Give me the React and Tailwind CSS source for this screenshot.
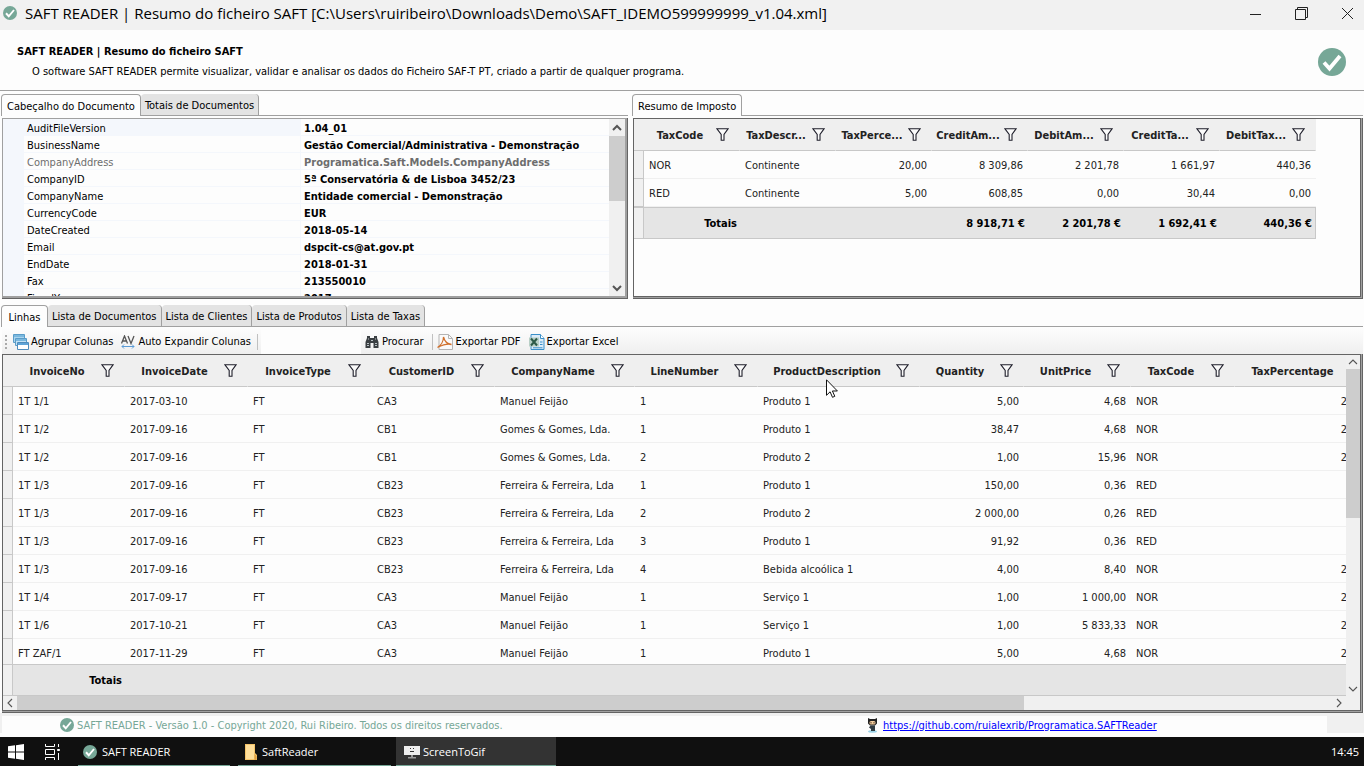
import React from 'react';

const PROPERTIES = [
  ['AuditFileVersion', '1.04_01'],
  ['BusinessName', 'Gestão Comercial/Administrativa - Demonstração'],
  ['CompanyAddress', 'Programatica.Saft.Models.CompanyAddress'],
  ['CompanyID', '5ª Conservatória & de Lisboa 3452/23'],
  ['CompanyName', 'Entidade comercial - Demonstração'],
  ['CurrencyCode', 'EUR'],
  ['DateCreated', '2018-05-14'],
  ['Email', 'dspcit-cs@at.gov.pt'],
  ['EndDate', '2018-01-31'],
  ['Fax', '213550010'],
  ['FiscalYear', '2017'],
];

const TAX_COLUMNS = ['TaxCode', 'TaxDescr...', 'TaxPerce...', 'CreditAm...', 'DebitAm...', 'CreditTa...', 'DebitTax...'];
const TAX_ROWS = [
  ['NOR', 'Continente', '20,00', '8 309,86', '2 201,78', '1 661,97', '440,36'],
  ['RED', 'Continente', '5,00', '608,85', '0,00', '30,44', '0,00'],
];
const TAX_TOTALS = ['Totais', '', '', '8 918,71 €', '2 201,78 €', '1 692,41 €', '440,36 €'];

const LINE_COLUMNS = [
  { name: 'InvoiceNo', width: 'w-[112px]' },
  { name: 'InvoiceDate', width: 'w-[123px]' },
  { name: 'InvoiceType', width: 'w-[124px]' },
  { name: 'CustomerID', width: 'w-[123px]' },
  { name: 'CompanyName', width: 'w-[140px]' },
  { name: 'LineNumber', width: 'w-[123px]' },
  { name: 'ProductDescription', width: 'w-[162px]' },
  { name: 'Quantity', width: 'w-[104px]', numeric: true },
  { name: 'UnitPrice', width: 'w-[107px]', numeric: true },
  { name: 'TaxCode', width: 'w-[104px]' },
  { name: 'TaxPercentage', width: 'w-[139px]', numeric: true },
];
const LINES = [
  ['1T 1/1', '2017-03-10', 'FT', 'CA3', 'Manuel Feijão', '1', 'Produto 1', '5,00', '4,68', 'NOR', '20,00'],
  ['1T 1/2', '2017-09-16', 'FT', 'CB1', 'Gomes & Gomes, Lda.', '1', 'Produto 1', '38,47', '4,68', 'NOR', '20,00'],
  ['1T 1/2', '2017-09-16', 'FT', 'CB1', 'Gomes & Gomes, Lda.', '2', 'Produto 2', '1,00', '15,96', 'NOR', '20,00'],
  ['1T 1/3', '2017-09-16', 'FT', 'CB23', 'Ferreira & Ferreira, Lda', '1', 'Produto 1', '150,00', '0,36', 'RED', '5,00'],
  ['1T 1/3', '2017-09-16', 'FT', 'CB23', 'Ferreira & Ferreira, Lda', '2', 'Produto 2', '2 000,00', '0,26', 'RED', '5,00'],
  ['1T 1/3', '2017-09-16', 'FT', 'CB23', 'Ferreira & Ferreira, Lda', '3', 'Produto 1', '91,92', '0,36', 'RED', '5,00'],
  ['1T 1/3', '2017-09-16', 'FT', 'CB23', 'Ferreira & Ferreira, Lda', '4', 'Bebida alcoólica 1', '4,00', '8,40', 'NOR', '20,00'],
  ['1T 1/4', '2017-09-17', 'FT', 'CA3', 'Manuel Feijão', '1', 'Serviço 1', '1,00', '1 000,00', 'NOR', '20,00'],
  ['1T 1/6', '2017-10-21', 'FT', 'CA3', 'Manuel Feijão', '1', 'Serviço 1', '1,00', '5 833,33', 'NOR', '20,00'],
  ['FT ZAF/1', '2017-11-29', 'FT', 'CA3', 'Manuel Feijão', '1', 'Produto 1', '5,00', '4,68', 'NOR', '20,00'],
];

function CheckBadge({ className }) {
  return (
    <svg viewBox="0 0 28 28" className={className} aria-hidden="true">
      <circle cx="14" cy="14" r="14" fill="#76a797" />
      <path d="M6 14.500 11.500 20.500 22 8" fill="none" stroke="#fff" strokeWidth="3.800" />
    </svg>
  );
}

function Funnel() {
  return (
    <svg viewBox="0 0 13 13" className="block h-[13px] w-[13px]" aria-hidden="true">
      <path d="M.8.700h11.400L8 6.400v5.800H5.200V6.400z" fill="#fafafa" stroke="#1f1f2b" strokeWidth="1.100" />
    </svg>
  );
}

function Chevron({ direction, thick }) {
  const paths = {
    up: 'M1 7l4-4 4 4',
    down: 'M1 3l4 4 4-4',
    left: 'M7 1 3 5l4 4',
    right: 'M3 1l4 4-4 4',
  };
  return (
    <svg viewBox="0 0 10 10" className="block h-2.5 w-2.5" aria-hidden="true">
      <path d={paths[direction]} fill="none" stroke="#555" strokeWidth={thick ? 2 : 1.1} />
    </svg>
  );
}

function Tabs({ label, items }) {
  return (
    <div role="tablist" aria-label={label} className="flex h-[22px]">
      {items.map((item, i) => (
        <button
          key={item}
          role="tab"
          aria-selected={i === 0}
          className={
            i === 0
              ? 'min-w-[47px] rounded-t border-x border-t border-[#a0a0a0] bg-[#fdfdfd] px-[5px] pt-0.5 whitespace-nowrap'
              : 'rounded-t border-r border-b border-r-[#a0a0a0] border-b-[#a0a0a0] bg-[#e3e3e3] px-1 pt-0.5 whitespace-nowrap'
          }
        >
          {item}
        </button>
      ))}
      <div className="flex-1 border-b border-[#a0a0a0]" />
    </div>
  );
}

function HeaderCell({ name }) {
  return (
    <th scope="col" className="h-8 border-r border-b border-r-[#efefef] border-b-[#c8c8c8] bg-[#efefef] p-0">
      <div className="flex items-center pr-2.5">
        <span className="flex-1 pt-0.5 text-center whitespace-nowrap">{name}</span>
        <button aria-label={'Filtrar ' + name}>
          <Funnel />
        </button>
      </div>
    </th>
  );
}

function WindowBar() {
  return (
    <header className="flex h-[30px] shrink-0 items-center bg-[#f1f1f1] pr-2.5 pb-1 pl-[3px]">
      <CheckBadge className="h-3.5 w-3.5" />
      <h1 className="ml-2 flex-1 truncate font-['Open_Sans','Noto_Sans',sans-serif] text-[15px] leading-6">
        SAFT READER | Resumo do ficheiro SAFT [C:\Users\ruiribeiro\Downloads\Demo\SAFT_IDEMO599999999_v1.04.xml]
      </h1>
      <div className="flex items-center gap-[33px]">
        <button aria-label="Minimizar">
          <svg viewBox="0 0 13 13" className="h-[13px] w-[13px]"><path d="M1 7.500h11" stroke="#222" /></svg>
        </button>
        <button aria-label="Restaurar">
          <svg viewBox="0 0 13 13" className="h-[13px] w-[13px]" fill="none" stroke="#222">
            <path d="M.5 2.500h10v10H.5zM2.500 2.500v-2h10v10h-2" />
          </svg>
        </button>
        <button aria-label="Fechar">
          <svg viewBox="0 0 13 13" className="h-[13px] w-[13px]"><path d="M1 1l11 11M12 1 1 12" stroke="#222" /></svg>
        </button>
      </div>
    </header>
  );
}

function PropertyGrid() {
  return (
    <div className="flex h-[181px] border-r border-b border-[#646464]">
      <div className="flex flex-1 overflow-hidden border-t border-r-2 border-b-2 border-l border-[#a0a0a0]">
        <div className="flex-1 overflow-hidden">
          <table className="w-full table-fixed border-separate border-spacing-0 leading-3">
            <colgroup>
              <col className="w-[21px]" />
              <col className="w-[277px]" />
              <col />
            </colgroup>
            <tbody>
              {PROPERTIES.map(([name, value], i) => (
                <tr key={name} className={name === 'CompanyAddress' ? 'h-[17px] text-[#6d6d6d]' : 'h-[17px] text-black'}>
                  <td className="bg-[#f4f7fc] p-0" />
                  <th
                    scope="row"
                    className={
                      i === 0
                        ? 'border-r border-b border-[#f4f7fc] bg-[#f4f7fc] p-0 pt-1 pl-[3px] text-left font-normal'
                        : 'border-r border-b border-[#f4f7fc] p-0 pt-1 pl-[3px] text-left font-normal'
                    }
                  >
                    {name}
                  </th>
                  <td className="border-b border-[#f4f7fc] p-0 pt-1 pl-[3px] font-bold whitespace-nowrap">{value}</td>
                </tr>
              ))}
            </tbody>
          </table>
        </div>
        <div className="flex w-4 flex-col items-center bg-[#f0f0f0]">
          <div className="flex h-[17px] items-center"><Chevron direction="up" thick /></div>
          <div className="h-[65px] w-full bg-[#cdcdcd]" />
          <div className="mt-auto flex h-[17px] items-center"><Chevron direction="down" thick /></div>
        </div>
      </div>
    </div>
  );
}

function TaxGrid() {
  return (
    <div className="flex h-[181px] border-r border-b border-[#646464]">
      <div className="flex flex-1 overflow-hidden border-r border-b border-[#a0a0a0]">
        <div className="flex-1 overflow-hidden border border-[#646464] text-[#222]">
          <table className="w-[682px] table-fixed border-separate border-spacing-0">
            <colgroup>
              <col className="w-2.5" />
              {TAX_COLUMNS.map((c) => <col key={c} className="w-24" />)}
            </colgroup>
            <thead>
              <tr>
                <td className="border-b border-[#c8c8c8] bg-[#efefef] p-0" />
                {TAX_COLUMNS.map((c) => <HeaderCell key={c} name={c} />)}
              </tr>
            </thead>
            <tbody>
              {TAX_ROWS.map((row) => (
                <tr key={row[0]} className="h-7">
                  <td className="border-r border-b border-[#c8c8c8] bg-[#f0f0f0] p-0" />
                  {row.map((v, i) => (
                    <td
                      key={i}
                      className={
                        i > 1 ? 'border-b border-[#f0f0f0] p-0 pt-0.5 pr-[5px] text-right' : 'border-b border-[#f0f0f0] p-0 pt-0.5 pl-[5px]'
                      }
                    >
                      {v}
                    </td>
                  ))}
                </tr>
              ))}
            </tbody>
            <tfoot>
              <tr className="h-8">
                <td className="border-y border-r border-[#c8c8c8] bg-[#f0f0f0] p-0" />
                {TAX_TOTALS.map((v, i) => (
                  <td
                    key={i}
                    className="border-y border-[#c8c8c8] bg-[#e5e5e5] p-0 pt-0.5 pr-[3px] text-right font-bold text-black last:border-r"
                  >
                    {v}
                  </td>
                ))}
              </tr>
            </tfoot>
          </table>
        </div>
      </div>
    </div>
  );
}

function Toolbar() {
  return (
    <div role="toolbar" aria-label="Ações" className="mt-px ml-0.5 flex h-[26px] items-center bg-linear-to-b from-[#fdfdfd] to-[#efefef] pt-px pl-[3px] text-black">
      <svg viewBox="0 0 2 14" className="h-3.5 w-0.5"><path d="M1 0v14" stroke="#aaa" strokeWidth="2" strokeDasharray="2 2" /></svg>
      <button className="ml-1.5 flex items-center gap-0.5 whitespace-nowrap">
        <svg viewBox="0 0 16 16" className="h-4 w-4">
          <path d="M.5.500h11v8H.5z" fill="#a9d4ee" stroke="#5a9cc8" />
          <path d="M1 1h10v2H1z" fill="#7ab8de" />
          <path d="M2.500 4.500h11v7h-11z" fill="#c4e2f4" stroke="#5a9cc8" />
          <path d="M3 5h10v2H3z" fill="#7ab8de" />
          <path d="M4.500 8.500h11v7h-11z" fill="#fff" stroke="#4f8cbc" />
          <path d="M5 9h10v2H5z" fill="#5fa4d8" />
        </svg>
        Agrupar Colunas
      </button>
      <button className="ml-2 flex items-center gap-[3px] whitespace-nowrap">
        <svg viewBox="0 0 14 14" className="h-3.5 w-3.5">
          <path d="M.5 8.500 3.500 1 6.500 8.500M1.700 6h3.500M7 1l3 7.500L13 1" fill="none" stroke="#555" strokeWidth="1.300" />
          <path d="M1 11.500h12M3 9.500l-2 2 2 2M11 9.500l2 2-2 2" fill="none" stroke="#5b9bd5" />
        </svg>
        Auto Expandir Colunas
      </button>
      <div className="ml-1.5 h-4 w-px bg-[#c0c0c0]" />
      <input aria-label="Texto a procurar" className="ml-[3px] h-6 w-[100px] bg-[#fdfdfd] px-1" />
      <button className="ml-1 flex items-center gap-[3px]">
        <svg viewBox="0 0 14 14" className="h-3.5 w-3.5">
          <path d="M2 1h3v2h4V1h3v2l1.500 4v6H8.500V8h-3v5H.5V7L2 3z" fill="#3a3f42" />
          <path d="M2 8.500h2M10 8.500h2M2 10.500h2M10 10.500h2M3 4h1M10 4h1M6 5.500h2" stroke="#b8c0c4" />
        </svg>
        Procurar
      </button>
      <div className="ml-2 h-4 w-px bg-[#c0c0c0]" />
      <button className="ml-1 flex items-center gap-[3px] whitespace-nowrap">
        <svg viewBox="0 0 16 16" className="h-4 w-4">
          <path d="M2 .500h9.500l4 4v11H2z" fill="#fafafa" stroke="#b4b4b4" />
          <path d="M11.500.500v4h4" fill="none" stroke="#b4b4b4" />
          <path d="M.5 13.500C4 11.500 6.500 7 6.500 3c1 4 3.500 7 8 7.500-4-1-9 .5-14 3z" fill="none" stroke="#d0702c" strokeWidth="1.300" />
        </svg>
        Exportar PDF
      </button>
      <button className="ml-2 flex items-center gap-0.5 whitespace-nowrap">
        <svg viewBox="0 0 16 16" className="h-4 w-4">
          <path d="M2 .500h9.500l3.500 4v11H2z" fill="#dcecf8" stroke="#3a8fc8" />
          <path d="M11.500.500v4H15" fill="#fff" stroke="#3a8fc8" />
          <path d="M0 3.500h10v9H0z" fill="#b8cfc6" />
          <path d="M2 4.500l6 7M8 4.500l-6 7" stroke="#2c5a48" strokeWidth="2" />
          <path d="M11 8h2.500M11 10.500h2.500M4 13.800h9.500" stroke="#3a8fc8" />
        </svg>
        Exportar Excel
      </button>
    </div>
  );
}

function LinesGrid() {
  return (
    <div className="ml-0.5 flex min-h-0 flex-1 border-r border-b border-[#646464]">
      <div className="flex min-w-0 flex-1 border-r border-b border-[#a0a0a0]">
        <div className="flex min-w-0 flex-1 flex-col border border-[#646464]">
          <div className="flex min-h-0 flex-1">
            <div className="min-w-0 flex-1 overflow-hidden text-[#222]">
              <table className="w-[1371px] table-fixed border-separate border-spacing-0">
                <colgroup>
                  <col className="w-2.5" />
                  {LINE_COLUMNS.map((c) => <col key={c.name} className={c.width} />)}
                </colgroup>
                <thead>
                  <tr>
                    <td className="border-b border-[#c8c8c8] bg-[#efefef] p-0" />
                    {LINE_COLUMNS.map((c) => <HeaderCell key={c.name} name={c.name} />)}
                  </tr>
                </thead>
                <tbody>
                  {LINES.map((row, r) => (
                    <tr key={r} className="h-7">
                      <td className="border-r border-b border-[#c8c8c8] bg-[#f0f0f0] p-0" />
                      {row.map((v, i) => (
                        <td
                          key={i}
                          className={
                            LINE_COLUMNS[i].numeric
                              ? 'border-b border-[#f0f0f0] p-0 pt-0.5 pr-[5px] text-right whitespace-nowrap'
                              : 'border-b border-[#f0f0f0] p-0 pt-0.5 pl-[5px] whitespace-nowrap'
                          }
                        >
                          {v}
                        </td>
                      ))}
                    </tr>
                  ))}
                </tbody>
                <tfoot className="sticky bottom-0">
                  <tr className="h-8">
                    <td className="border-y border-r border-[#c8c8c8] bg-[#f0f0f0] p-0" />
                    <td className="border-y border-[#c8c8c8] bg-[#e5e5e5] p-0 pt-0.5 pr-[3px] text-right font-bold text-black">Totais</td>
                    <td colSpan={10} className="border-y border-[#c8c8c8] bg-[#e5e5e5] p-0" />
                  </tr>
                </tfoot>
              </table>
            </div>
            <div className="flex w-3.5 flex-col items-center bg-[#f0f0f0]">
              <div className="flex h-3.5 items-center"><Chevron direction="up" /></div>
              <div className="h-[149px] w-full bg-[#cdcdcd]" />
              <div className="mt-auto flex h-3.5 items-center"><Chevron direction="down" /></div>
            </div>
          </div>
          <div className="flex h-3.5 items-center bg-[#f0f0f0] pr-3.5">
            <div className="flex w-3.5 justify-center"><Chevron direction="left" /></div>
            <div className="h-full w-3/4 bg-[#cdcdcd]" />
            <div className="ml-auto flex w-3.5 justify-center"><Chevron direction="right" /></div>
          </div>
        </div>
      </div>
    </div>
  );
}

function StatusBar() {
  return (
    <footer className="flex h-5 shrink-0 bg-[#f0f0f0] pt-[3px] pl-0.5">
      <div className="flex flex-1 items-center bg-[#fdfdfd]">
        <div className="flex flex-1 items-center gap-[3px] pl-[58px] text-[#76a797]">
          <CheckBadge className="h-3.5 w-3.5" />
          <span className="pt-0.5">SAFT READER - Versão 1.0 - Copyright 2020, Rui Ribeiro. Todos os direitos reservados.</span>
        </div>
        <div className="flex w-[461px] items-center gap-1">
          <svg viewBox="0 0 13 16" className="h-4 w-[13px]" aria-hidden="true">
            <ellipse cx="6.500" cy="14.500" rx="4.500" ry="1.200" fill="#9cd3e8" />
            <path d="M2 1l2 1h5l2-1v5.500L9 8.500H4L2 6.500z" fill="#222" />
            <rect x="3.500" y="4" width="6" height="3.500" rx="1.500" fill="#f3cfa0" />
            <path d="M5 5v1.500M8 5v1.500" stroke="#5b3a22" />
            <path d="M4.500 8.500h4.500V14H5v-2L3 10.500z" fill="#2f3a40" />
          </svg>
          <a href="https://github.com/ruialexrib/Programatica.SAFTReader" className="pt-0.5 text-[#0000ff] underline">
            https://github.com/ruialexrib/Programatica.SAFTReader
          </a>
        </div>
      </div>
      <div className="w-[37px]" />
    </footer>
  );
}

function Taskbar() {
  return (
    <nav aria-label="Barra de tarefas" className="mt-1 flex h-[29px] shrink-0 items-center bg-[#101010] pl-2 font-['Open_Sans','Noto_Sans',sans-serif] text-[11px] text-white">
      <button aria-label="Iniciar">
        <svg viewBox="0 0 16 16" className="h-4 w-4" fill="#fff"><path d="M0 2.300 7 1.300v6.200H0zM8 1.200 16 0v7.500H8zM0 8.500h7v6.200l-7-1zM8 8.500h8V16l-8-1.200z" /></svg>
      </button>
      <button aria-label="Vista de tarefas" className="ml-5">
        <svg viewBox="0 0 17 16" className="h-4 w-[17px]" fill="none" stroke="#fff">
          <path d="M1.500 0v2.500h9V0M1.500 5.500h9v5h-9zM1.500 16v-2.500h9V16M14.500 0v3M14.500 9v7" />
          <path d="M13.500 5.500h2v1h-2z" fill="#fff" />
        </svg>
      </button>
      <button className="ml-[17px] flex h-full w-[152px] items-center gap-[5px] border-b border-[#76a797] pt-px pl-[5px]">
        <CheckBadge className="h-3.5 w-3.5" />
        SAFT READER
      </button>
      <button className="ml-2 flex h-full w-[153px] items-center gap-1 border-b border-[#76a797] pt-px pl-1.5">
        <svg viewBox="0 0 14 16" className="h-4 w-3.5"><path d="M1 0h10v9l2 2v5H1z" fill="#f5c469" /><path d="M2 1h8v14H2z" fill="#ffdf9a" /><path d="M10.500 10l2 2v4h-2z" fill="#e0a040" /></svg>
        SaftReader
      </button>
      <button className="ml-[5px] flex h-full w-[160px] items-center gap-[3px] border-b border-[#76a797] bg-[#333] pt-px pl-2">
        <svg viewBox="0 0 16 14" className="h-3.5 w-4"><path d="M0 1h16v9H0z" fill="#eee" /><path d="M6 3h1v1H6zM9 3h1v1H9zM6 6h4v1H6z" fill="#333" /><path d="M7 10h2v2h3v1.500H4V12h3z" fill="#999" /></svg>
        ScreenToGif
      </button>
      <time className="ml-auto pr-[5px]">14:45</time>
    </nav>
  );
}

export default function App() {
  return (
    <div className="relative flex h-screen flex-col overflow-hidden bg-[#fdfdfd] font-['DejaVu_Sans_Condensed','Noto_Sans',sans-serif] text-[11px] leading-4 text-black">
      <WindowBar />
      <section className="flex h-[61px] shrink-0 items-center justify-between border-b border-[#a0a0a0] pt-[3px] pr-[18px] pl-[17px]">
        <div className="flex flex-col gap-1">
          <h2 className="font-bold">SAFT READER | Resumo do ficheiro SAFT</h2>
          <p className="pl-[15px]">
            O software SAFT READER permite visualizar, validar e analisar os dados do Ficheiro SAF-T PT, criado a partir de qualquer programa.
          </p>
        </div>
        <CheckBadge className="h-7 w-7" />
      </section>

      <div className="mt-[3px] flex shrink-0 gap-1 pr-px pl-px">
        <section className="w-[627px] shrink-0">
          <Tabs label="Documento" items={['Cabeçalho do Documento', 'Totais de Documentos']} />
          <div className="pt-0.5 pl-px"><PropertyGrid /></div>
        </section>
        <section className="min-w-0 flex-1">
          <Tabs label="Imposto" items={['Resumo de Imposto']} />
          <div className="pt-0.5 pl-px"><TaxGrid /></div>
        </section>
      </div>

      <main className="mt-1.5 flex min-h-0 flex-1 flex-col pr-px">
        <div className="pl-px">
          <Tabs label="Listas" items={['Linhas', 'Lista de Documentos', 'Lista de Clientes', 'Lista de Produtos', 'Lista de Taxas']} />
        </div>
        <Toolbar />
        <LinesGrid />
      </main>

      <StatusBar />
      <Taskbar />

      <svg viewBox="0 0 12 19" className="pointer-events-none absolute top-[379px] left-[826px] h-[19px] w-3" aria-hidden="true">
        <path d="M.5.800v15.500l3.600-3.500 2.400 5.500 2.300-1-2.400-5.300h5z" fill="#fff" stroke="#111" />
      </svg>
    </div>
  );
}
